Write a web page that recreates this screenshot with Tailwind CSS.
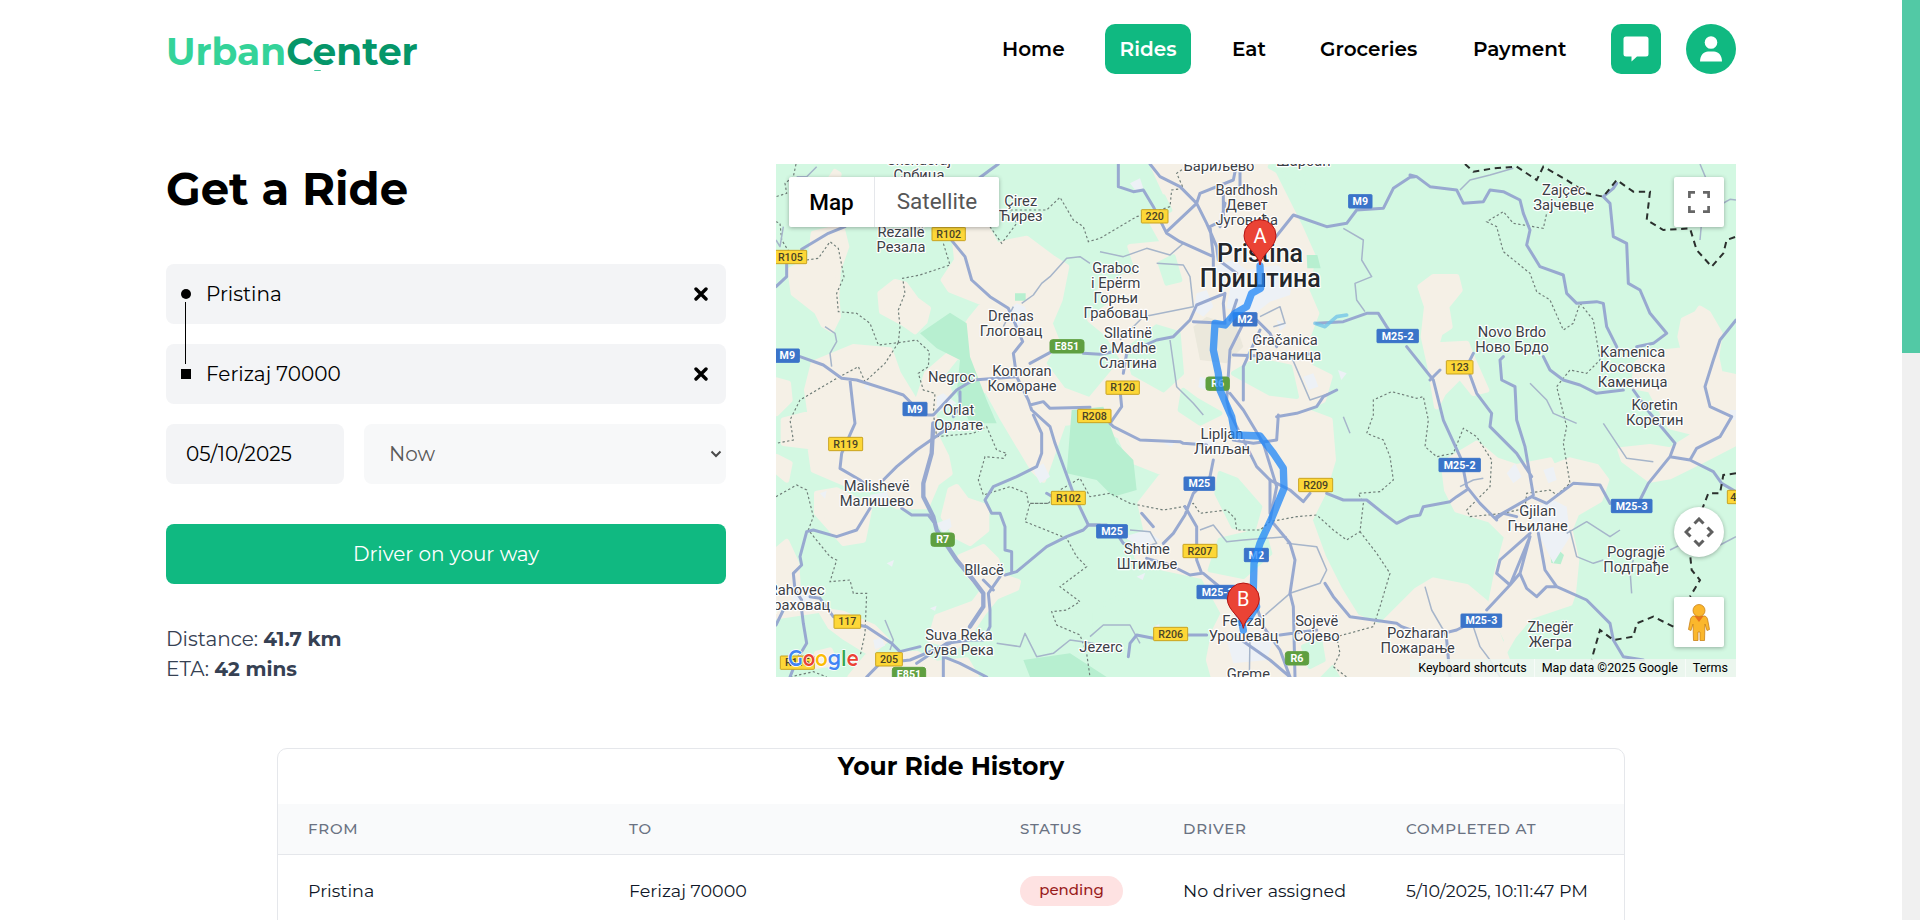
<!DOCTYPE html>
<html lang="en">
<head>
<meta charset="utf-8">
<title>UrbanCenter</title>
<script src="https://cdn.jsdelivr.net/npm/@tailwindcss/browser@4"></script>
</head>
<body class="bg-white text-black font-['Montserrat','Inter',sans-serif] w-[1920px] h-[920px] overflow-hidden flex">
<div class="w-[1902px] h-[920px] overflow-hidden">
  <header class="ml-[166px] w-[1570px] pt-6 flex items-center justify-between">
    <a class="relative pt-[3px] text-[37.5px] leading-[50px] h-[50px] font-bold whitespace-nowrap"><span class="text-[#34d399]">Urban</span><span class="text-[#059669]">Center</span><i class="absolute left-[148px] top-[46px] w-[7px] h-px rounded-t-full bg-[#10b981]/80"></i></a>
    <nav class="flex items-center text-[20px] font-semibold h-[50px]">
      <a class="w-[103px]">Home</a>
      <a class="w-[86px] h-[50px] rounded-[10px] bg-[#10b981] text-white flex items-center justify-center mr-[41px]">Rides</a>
      <a class="w-[88px]">Eat</a>
      <a class="w-[153px]">Groceries</a>
      <a class="w-[138px]">Payment</a>
      <button class="size-[50px] rounded-[10px] bg-[#10b981] flex items-center justify-center mr-[25px]">
        <svg width="26" height="26" viewBox="0 0 26 26" fill="#fff"><path d="M3 .5h20a2.500 2.500 0 0 1 2.500 2.500v15a2.500 2.500 0 0 1-2.500 2.500H14l-5.500 5v-5H3A2.500 2.500 0 0 1 .5 18V3A2.500 2.500 0 0 1 3 .5z"/></svg>
      </button>
      <button class="size-[50px] rounded-full bg-[#10b981] flex items-center justify-center">
        <svg width="24" height="26" viewBox="0 0 24 26" fill="#fff"><circle cx="12" cy="6.500" r="6.300"/><path d="M1 25.500c0-6.500 4-10 8-10h6c4 0 8 3.500 8 10z"/></svg>
      </button>
    </nav>
  </header>
  <main class="ml-[166px] w-[1570px] mt-[90px] flex gap-[50px] h-[513px]">
    <section class="w-[560px]">
      <h1 class="text-[45px] leading-[50px] font-bold whitespace-nowrap">Get a Ride</h1>
      <div class="relative mt-[50px] flex flex-col gap-5 text-[20px]">
        <div class="h-[60px] rounded-lg bg-gray-100 flex items-center px-[15px]">
          <i class="size-[10px] rounded-full bg-black mr-[15px]"></i><span>Pristina</span>
          <svg class="ml-auto mr-[3px]" width="14" height="14" viewBox="0 0 14 14" stroke="#000" stroke-width="3.400" stroke-linecap="round"><path d="M2 2l10 10M12 2L2 12"/></svg>
        </div>
        <div class="h-[60px] rounded-lg bg-gray-100 flex items-center px-[15px]">
          <i class="size-[10px] bg-black mr-[15px]"></i><span>Ferizaj 70000</span>
          <svg class="ml-auto mr-[3px]" width="14" height="14" viewBox="0 0 14 14" stroke="#000" stroke-width="3.400" stroke-linecap="round"><path d="M2 2l10 10M12 2L2 12"/></svg>
        </div>
        <i class="absolute left-[19px] top-[38px] w-px h-[62px] bg-black"></i>
        <div class="flex gap-5">
          <div class="w-[178px] h-[60px] rounded-lg bg-gray-100 flex items-center pl-5">05/10/2025</div>
          <div class="flex-1 h-[60px] rounded-lg bg-[#f7f8f9] flex items-center justify-between pl-[25px] pr-1 text-[#5a5a5a]"><span>Now</span>
            <svg width="12" height="8" viewBox="0 0 12 8" fill="none" stroke="#4a4a4a" stroke-width="2"><path d="M1.500 1.500L6 6l4.500-4.500"/></svg></div>
        </div>
      </div>
      <button class="mt-10 w-full h-[60px] rounded-lg bg-[#10b981] text-white text-[20px]">Driver on your way</button>
      <div class="mt-10 text-[20px] leading-[30px] text-gray-700 whitespace-nowrap">
        <p>Distance: <b>41.7 km</b></p>
        <p>ETA: <b>42 mins</b></p>
      </div>
    </section>
    <section class="relative w-[960px] h-[513px] overflow-hidden">
      <svg id="map" class="block" width="960" height="513" viewBox="18 12 2880 1539" font-family="Roboto, sans-serif">
        <rect x="0" y="0" width="2940" height="1600" fill="#d3f8e2"/>
        <g fill="#f5f0e6" stroke="#f5f0e6" stroke-width="16" stroke-linejoin="round">
          <path d="M195 35l12 8-4 20-30 5zM130 220L215 200L230 260L205 330L200 410L205 470L185 510L160 495L140 455L70 400L60 330L120 300zM330 400L375 365L405 372L440 420L475 445L465 485L435 515L400 490L335 455z"/>
          <path d="M550 200L650 200L680 255L720 245L770 235L850 295L890 320L870 420L840 490L860 540L820 610L880 690L960 720L1060 600L1010 520L960 480L1040 420L990 390L1060 350L1110 350L1080 260L1180 250L1130 160L1200 130L1150 20L1500 20L1540 100L1590 200L1630 290L1610 390L1640 460L1610 540L1620 620L1680 650L1660 720L1600 750L1680 780L1690 900L1660 1000L1620 1080L1660 1190L1710 1290L1760 1370L1830 1400L1940 1290L1990 1260L2090 1280L2150 1330L2190 1440L2230 1551L1900 1551L1720 1551L1690 1500L1640 1551L1330 1551L1310 1480L1320 1440L1360 1360L1300 1250L1160 1220L1100 1190L1130 1120L1110 1030L1180 940L1080 900L1050 830L960 780L880 790L820 960L790 930L700 780L650 690L600 700L610 600L560 590L520 640L540 700L490 745L500 830L530 890L540 940L500 970L470 1040L380 1040L340 960L270 990L130 930L120 860L40 850L40 780L120 760L110 690L130 610L250 560L360 570L385 640L440 730L470 640L540 580L560 540L600 480L640 430L540 390L520 360L560 300z"/>
          <path d="M20 660L55 670L60 720L20 760zM20 890L60 910L50 960L20 935zM140 1000L200 990L300 1040L280 1140L220 1150L140 1060zM540 990L560 980L590 1020L650 1040L650 1110L600 1150L560 1130L520 1070zM570 1190L640 1160L680 1200L700 1250L745 1265L740 1285L680 1310L640 1360L600 1420L560 1460L480 1440L500 1370L610 1330L640 1290L590 1240zM20 1170L50 1145L80 1210L85 1290L140 1310L150 1350L220 1360L310 1400L350 1440L300 1480L220 1430L180 1400L150 1350L20 1370zM140 1480L180 1470L200 1510L130 1520zM240 1551L290 1490L440 1480L500 1510L590 1500L620 1551z"/>
          <path d="M1950 380L1990 350L2060 350L2070 390L2030 440L2040 500L2010 520L2000 555L2090 550L2110 600L2150 690L2110 700L2070 650L2020 700L2000 740L1980 620L1960 530L1970 440zM2740 480L2780 460L2790 445L2815 460L2850 520L2840 590L2850 640L2898 650L2898 850L2800 900L2700 950L2640 960L2560 900L2550 870L2640 860L2700 870L2780 820L2700 800L2640 690L2590 680L2600 610L2640 580L2740 570L2730 530z"/>
          <path d="M2020 910L2120 850L2180 900L2240 920L2340 900L2350 920L2400 900L2480 920L2510 960L2490 1020L2420 1060L2400 1110L2420 1200L2410 1300L2400 1330L2280 1370L2230 1430L2190 1500L2210 1440L2160 1340L2180 1240L2210 1130L2160 1080L2060 1050L2030 990z"/>
          <path d="M1570 1180L1640 1220L1700 1300L1750 1370L1720 1410L1600 1400L1560 1280z"/>
        </g>
        <g fill="#d3f8e2" stroke="#d3f8e2" stroke-width="14" stroke-linejoin="round">
          <path d="M1160 500L1225 520L1235 640L1180 690L1090 640L1070 570zM1390 640L1460 600L1560 620L1580 710L1500 700zM1170 310L1210 290L1230 360L1190 370zM1350 940L1400 960L1470 1040L1450 1110L1390 1100L1340 1000zM1350 1140L1480 1110L1500 1180L1420 1250L1320 1230zM1120 120L1180 110L1200 150L1150 180zM1240 690L1280 720L1350 760L1290 790L1230 750zM1600 20L1500 20L1620 90zM1600 1460L1650 1440L1660 1500L1620 1520z"/>
          <path d="M1080 1300L1250 1290L1320 1400L1290 1551L960 1551L960 1350z"/>
        </g>
        <g fill="#b7efd0">
          <path d="M450 520L540 458L590 490L600 590L650 720L680 790L600 790L560 700L570 600L500 565zM905 750L1000 740L1040 850L1090 900L1100 990L1030 1010L980 960L890 940zM735 400h32v22h-32zM1610 285h32l10 40h-40zM760 1500L900 1480L1010 1551L780 1551zM2340 1175l20-10 22 20-10 28-28-4z"/>
          <path d="M1270 500L1310 470L1400 500L1420 560L1370 610L1290 600z" fill="#ebe8dc"/>
        </g>
        <g fill="#edf1f6">
          <path d="M690 470l50-40 25 10 10 40-30 20zM1330 320l60-20 40 30 90-15 50 30-10 60-60 20-50 40-80-20 10-60zM1080 70l30-15 10 30-20 10zM1280 400l30-10 20 50-30 30-30-20zM1290 650l30 10-10 30-25-8zM2270 1050l80-30 40 20 10 90-50 80-30-60zM300 1005l50-10 10 30-50 10zM500 1090l40-15 5 25-25 20zM60 1280l60 5 10 40-60 5zM1370 1440l90-30 50 30-20 60-100 10zM1060 1130l70-20 40 30-60 20zM790 930l30-20 20 40-30 20zM560 730l-60 30 0-50 20-10zM1270 845l60-10 20 40-60 10zM1600 650l30-10 15 40-30 10zM2210 940l25-30 20 40-25 20zM2320 930l30-10 10 40-25 10zM310 1440l25-8 10 25-30 10zM2880 750l18 0v30h-18z"/>
          <path d="M150 1000l20-8-5 24zM280 680l16-8 4 22zM350 1210l22-10-6 20zM480 1345l20-8-5 16zM1100 1250l26-12-8 22zM1150 1400l18-8 2 20zM1520 480l30 14-20 20zM1730 640l-26-10 10 30zM1180 850l36-10-10 20z"/>
        </g>
        <g fill="none" stroke="#6f7d78" stroke-width="3.500" stroke-dasharray="7 7">
          <path d="M78 12L70 50L45 70L50 100L18 110M18 185L30 190L35 240L60 280M110 300L145 295L180 245L205 265L222 350L200 400L205 455L260 460L300 490L325 555L385 548L390 500L385 450L405 400L398 355L450 345L480 335L540 315L520 250M385 548L345 610L285 665L265 620L200 655L90 720L60 780L70 840L18 850M385 548L440 540L478 575L475 620L445 640L460 690L495 700L490 760L500 830M660 200L695 250L740 190L720 150L830 150L870 112L910 180L940 200L955 245L990 235L1100 170L1155 155L1200 140L1205 90L1240 85L1220 40L1260 12"/>
          <path d="M500 830L610 820L650 800L680 870L710 880L700 895L645 890L625 960L640 1005L720 980L770 1000L775 1030L835 1030L780 1030L765 1085L890 1135L920 1190L950 1220L870 1280L930 1325L890 1350L845 1355L860 1395L930 1425L950 1480L960 1551M835 1030L870 990L930 955L960 1010L1020 1000L1080 1030L1180 1050L1240 1040L1270 1030L1290 1060L1370 1050L1395 1075L1400 1110L1470 1110L1500 1085L1580 1070L1640 1065L1690 1110L1730 1140L1770 1115L1780 1030L1765 1000L1830 995L1870 960L1860 890L1840 840L1790 820L1810 765L1810 720L1865 695L1940 715L1960 710L1975 780L1965 860L2000 890L2050 880L2080 805L2120 830L2165 900L2160 980L2090 1050L2100 1070L2200 1060L2265 1045L2270 1000L2340 990L2360 1005L2400 970L2380 850L2390 800L2370 720L2360 680L2400 630L2450 640L2490 600L2470 480L2430 430L2410 490L2380 510L2340 420L2300 395L2280 340L2200 275L2180 200L2150 185L2200 155L2230 190L2320 205L2330 160"/>
          <path d="M18 1010L80 975L110 990L130 1070L115 1110L180 1190L200 1200L180 1265L240 1260L250 1300L290 1300L285 1420L270 1490M1770 1115L1820 1180L1860 1240L1830 1340L1810 1400L1700 1430L1710 1480L1690 1520L1730 1551M60 1551L130 1535L170 1551"/>
        </g>
        <g fill="none" stroke="#a6b5ca" stroke-width="4.500" stroke-linejoin="round">
          <path d="M165 500L195 520L200 545L180 580L185 620M755 430L790 405L815 370L840 350L890 295L930 290L960 310M990 275L1060 290L1130 265L1200 285L1240 250M700 500L730 440M1720 205L1780 240L1775 300L1805 350L1755 370L1760 420L1785 455M1160 310L1240 315L1260 350L1270 440L1120 470L1050 540M1200 540L1220 680L1270 730L1300 765M1470 470L1530 440L1545 490L1510 500M1560 580L1590 650L1620 720L1680 700M1080 1110L1140 1115L1160 1150L1090 1170M1290 1110L1330 1095L1370 1145L1420 1140L1550 1130M1550 1150L1640 1160L1670 1230L1650 1270L1560 1300L1480 1370M960 1430L1000 1395L1080 1395L1110 1450M2070 90L2100 60L2160 45L2230 25M2790 12L2810 60L2800 130L2790 240M2850 135L2880 118L2898 120M2400 1110L2420 1190L2470 1210L2500 1200M2390 1120L2450 1085L2520 1130L2550 1110M2500 790L2540 850L2570 895L2650 905M2590 1200L2580 1230L2585 1300M2740 1150L2700 1170M2850 1155L2898 1130M1965 1280L1985 1350L2020 1410L2030 1440M2110 1400L2130 1460L2160 1500L2190 1551M345 1380L370 1440L360 1470M680 1450L750 1460L765 1420L800 1490L850 1480L900 1440L970 1450M2280 670L2330 720L2350 760L2420 790M1440 1430L1438 1551M1720 770L1740 820"/>
          <path d="M18 240L30 260L40 200M140 20L110 50L80 50M2070 980L2110 960L2140 955"/>
        </g>
        <g fill="none" stroke="#98a9d0" stroke-width="9" stroke-linejoin="round" stroke-linecap="round">
          <path d="M95 268L150 235L175 220L225 200M620 60L660 30L685 12M18 380L50 350L50 310M540 235L585 290L605 360L660 410L715 445L735 490L758 545L730 580L740 650L775 720L785 750L840 800L855 850L910 1000L955 1095M90 590L160 615L215 655L260 660L370 695L400 705L430 735M240 660L250 750L255 790L215 880L210 925L270 960L300 985M780 610L845 575M940 580L990 583L1060 570M430 765L490 765L560 690L610 660L680 655L740 650M570 695L570 740L550 770M340 960L380 920L440 870L540 800M395 1045L425 1065L475 1065L490 1085M780 735L820 725L840 745L960 742M300 1045L260 1110L200 1130L130 1110L110 1115L90 1190L95 1215L70 1240L75 1290L95 1320M95 1350L100 1390L110 1450L80 1500L60 1551M18 1395L40 1350M120 1310L150 1315L190 1370L240 1390L290 1400L365 1450L390 1475L450 1460M440 1510L530 1450L600 1440L640 1440L660 1400L660 1350L655 1300L690 1250"/>
          <path d="M790 765L815 820L815 880L800 920L740 950L670 980L645 1020L665 1060L690 1060L705 1100L705 1170L725 1175L725 1235M705 1245L740 1235L830 1160L890 1130L940 1110L955 1095L1010 1095M1115 1060L1150 1100M830 1000L880 1030M290 1551L330 1510L420 1500L540 1450M520 1551L520 1490L570 1510L650 1551M640 1260L670 1290"/>
          <path d="M1045 12L1045 80L1090 95L1120 90L1150 140L1190 220L1230 245L1330 290M1140 12L1170 50L1230 80L1280 130L1310 190L1340 260L1345 300L1400 340M1400 12L1390 60L1290 100L1280 130L1190 215M1410 12L1410 80M1360 100L1360 180L1320 200L1330 290L1330 320M1365 130L1350 200M1510 240L1570 165L1670 200L1730 190L1760 150L1840 145L1870 85L1920 52L1935 50M1270 485L1365 490M1365 490L1360 430L1365 400L1280 435L1260 480L1210 530L1160 540L1070 580L1060 640M1400 420L1380 480M1415 500L1380 570L1370 720L1380 760L1460 920L1500 960L1500 1060M1050 690L1055 740L1020 790L1030 800L1110 840L1230 845L1240 850L1310 855M1330 900L1320 950L1270 1000L1245 1065L1210 1120L1180 1150M1245 1040L1280 1100L1280 1200L1295 1240L1260 1245L1200 1215L1130 1195M1300 1240L1360 1290L1385 1340L1410 1380M960 1095L990 1095M1040 1120L1060 1150L1110 1170M1380 700L1420 750L1480 850L1520 980L1500 1080M1390 585L1540 590L1640 580M1460 480L1500 520L1520 560M1640 490L1720 485L1790 460L1825 460L1850 500L1870 530M1910 560L1990 660L2020 780L2075 900L2090 980L2130 1030L2180 1080"/>
          <path d="M1390 840L1450 850L1520 840L1525 765M1520 770L1580 760L1640 740L1660 710L1700 690M1470 510L1420 620L1420 720M1500 960L1540 980L1560 990L1600 1025L1620 1000M1670 1000L1720 1020L1790 1020L1840 1060L1880 1090L1920 1070L1950 1065L1960 1040L2040 1025L2060 1010L2090 990M1510 1090L1560 1150L1575 1200L1560 1300L1570 1340L1575 1551M1665 1270L1690 1310L1740 1370L1880 1390L1895 1400L1980 1430L2060 1410L2090 1395M1075 1490L1080 1450L1100 1425L1150 1435M1250 1425L1310 1425M1400 1430L1500 1500L1560 1551M1460 1340L1480 1400L1530 1470L1560 1551M1530 1425L1640 1410M2030 1440L2040 1551"/>
          <path d="M1920 45L1940 50L1980 80L2060 90L2080 130L2140 125L2160 90L2200 95L2250 120L2260 160L2280 210L2270 255L2310 320L2380 345L2390 400L2420 430L2480 425L2500 430L2510 500L2540 560L2545 580M2500 110L2530 85L2540 70M2500 110L2520 130L2530 230L2570 250L2575 370L2610 390L2640 460L2690 520L2650 550L2600 560M2590 690L2640 760L2715 850L2700 890L2635 970L2610 1020M2700 890L2760 900L2780 865L2850 830L2885 770L2820 740L2805 680L2830 600L2850 540L2898 480M2760 900L2830 935L2855 970L2898 995M2320 590L2340 630L2380 660L2430 675L2480 700L2560 690M2200 590L2190 600L2195 660L2235 680L2240 780L2265 860L2290 1005M2110 580L2090 620M1980 660L2010 630M2100 645L2120 700L2165 760L2160 800L2240 880L2285 950M2285 1010L2330 1030L2410 970L2490 975L2520 1030M2285 1010L2250 1030L2180 1070M2180 1075L2200 1060L2240 1070"/>
          <path d="M2280 1120L2190 1200L2180 1240L2220 1275L2280 1130L2250 1240L2220 1275L2150 1350M2305 1120L2325 1230L2360 1280L2450 1320L2480 1350L2520 1390L2530 1440L2560 1490L2620 1500M2250 1240L2270 1285L2300 1310L2330 1280L2360 1280"/>
        </g>
        <g fill="none" stroke="#98a9d0" stroke-width="13" stroke-linecap="round" stroke-linejoin="round"><path d="M490 790L485 880L460 970L460 1010L490 1070L500 1110L560 1200L610 1260L640 1300L640 1340L600 1400"/></g>
        <g fill="none" stroke="#2b2f2d" stroke-width="6" stroke-dasharray="19 14">
          <path d="M2085 12L2110 35L2170 25L2240 20L2300 60L2320 20L2390 60L2450 100L2500 110L2540 60L2590 95L2640 95L2630 180L2680 210L2760 205L2780 270L2825 320L2860 280L2870 240L2898 230M2898 940L2860 945L2850 1000L2815 1000L2780 1090L2760 1180L2765 1230L2790 1260L2760 1310M2710 1400L2650 1370L2600 1390L2590 1430L2530 1440L2490 1410L2470 1480L2465 1500"/>
        </g>
        <g fill="none" stroke-linecap="round" stroke-linejoin="round">
          <path d="M1635 490L1665 500L1700 470L1730 465" stroke="#6fc3e8" stroke-width="11" opacity=".75"/>
        </g>
        <g id="shields" font-size="32" text-anchor="middle"></g>
        <g id="places" font-size="44" text-anchor="middle" fill="#3c4046" stroke="#fff" stroke-width="7" stroke-linejoin="round" paint-order="stroke"></g>
        <path d="M1470 318L1472 385L1445 400L1430 440L1395 460L1365 495L1335 490L1330 570L1345 640L1350 690L1385 770L1395 825L1470 828L1510 880L1540 925L1542 985L1505 1075L1470 1150L1452 1210L1450 1290L1460 1340L1440 1370L1415 1385L1420 1410" fill="none" stroke="#1f86f7" stroke-width="22" stroke-linecap="round" stroke-linejoin="round" opacity=".76"/>
        <g stroke="#b31412" stroke-width="3" fill="#ea4335">
          <path d="M1470 315C1466 282 1422 262 1422 227a48 48 0 0 1 96 0C1518 262 1474 282 1470 315z"/>
          <path d="M1420 1405C1416 1372 1372 1352 1372 1317a48 48 0 0 1 96 0C1468 1352 1424 1372 1420 1405z"/>
        </g>
        <g fill="#fff" font-size="60" text-anchor="middle"><text x="1470" y="248">A</text><text x="1420" y="1338">B</text></g>
        <g font-family="Montserrat, Lato, sans-serif" font-size="68" font-weight="600" stroke="#fff" stroke-width="5" paint-order="stroke" stroke-linejoin="round"><text x="54" y="1518" textLength="212" lengthAdjust="spacingAndGlyphs"><tspan fill="#4285f4">G</tspan><tspan fill="#ea4335">o</tspan><tspan fill="#fbbc04">o</tspan><tspan fill="#4285f4">g</tspan><tspan fill="#34a853">l</tspan><tspan fill="#ea4335">e</tspan></text></g>
      </svg>
      <div class="absolute left-[13px] top-[13px] h-[50px] bg-white rounded-[2px] shadow-[0_1px_4px_rgba(0,0,0,0.3)] flex items-center font-['Roboto',sans-serif] text-[22.500px]">
        <span class="w-[86px] text-center font-medium border-r border-gray-200 leading-[50px]">Map</span><span class="w-[124px] text-center text-[#565656]">Satellite</span>
      </div>
      <div class="absolute right-3 top-[13px] size-[50px] bg-white rounded-[2px] shadow-[0_1px_4px_rgba(0,0,0,0.3)] flex items-center justify-center">
        <svg width="22" height="22" viewBox="0 0 22 22" fill="none" stroke="#666" stroke-width="2.700"><path d="M1.400 7V1.400H7M15 1.400h5.600V7M20.600 15v5.600H15M7 20.600H1.400V15"/></svg>
      </div>
      <div class="absolute right-3 top-[343px] size-[50px] bg-white rounded-full shadow-[0_1px_4px_rgba(0,0,0,0.3)] flex items-center justify-center">
        <svg width="30" height="30" viewBox="0 0 30 30" fill="none" stroke="#5f5f5f" stroke-width="3"><path d="M10.500 6.500L15 2l4.500 4.500M10.500 23.500L15 28l4.500-4.500M6.500 10.500L2 15l4.500 4.500M23.500 10.500L28 15l-4.500 4.500"/></svg>
      </div>
      <div class="absolute right-3 top-[433px] size-[50px] bg-white rounded-[2px] shadow-[0_1px_4px_rgba(0,0,0,0.3)] flex items-center justify-center">
        <svg width="22" height="37" viewBox="0 0 22 37" fill="#fbb72c" stroke="#c8821a" stroke-width=".8"><path d="M5 12h12q2 1 2.500 3l2 10.500-2.500 1-2-6.500-.5 16.500h-4.500V28h-2v8.500H5.500L5 20l-2 6.500-2.500-1L2.500 15Q3 13 5 12z"/><path d="M6.500 12L11 18l4.500-6z" fill="#e8711c" stroke="none"/><circle cx="11" cy="6.500" r="6"/></svg>
      </div>
      <div class="absolute right-0 bottom-0 h-[18px] bg-[#eff6f0]/85 flex items-center font-['Roboto',sans-serif] text-[12.500px] text-black whitespace-nowrap">
        <span class="pl-2 pr-[7px]">Keyboard shortcuts</span><span class="px-[7px] border-l border-white/60">Map data ©2025 Google</span><span class="pl-[7px] pr-2 border-l border-white/60">Terms</span>
      </div>
    </section>
  </main>
  <section class="ml-[277px] mt-[71px] w-[1348px] h-[200px] border border-gray-200 rounded-t-[10px] overflow-hidden">
    <h2 class="text-center text-[25px] leading-[35px] font-bold pb-5">Your Ride History</h2>
    <div class="h-[51px] bg-gray-50 border-b border-gray-200 grid grid-cols-[321px_391px_163px_223px_1fr] pl-[30px] items-center text-[15px] font-medium tracking-wider text-gray-500">
      <div>FROM</div><div>TO</div><div>STATUS</div><div>DRIVER</div><div>COMPLETED AT</div>
    </div>
    <div class="h-[72px] grid grid-cols-[321px_391px_163px_223px_1fr] pl-[30px] items-center text-[17.500px] text-gray-900">
      <div>Pristina</div><div>Ferizaj 70000</div><div class="w-[103px] h-[30px] -mt-px rounded-full bg-[#fee2e2] text-[#991b1b] text-[15px] font-medium flex items-center justify-center">pending</div><div>No driver assigned</div><div>5/10/2025, 10:11:47 PM</div>
    </div>
  </section>
</div>
<aside class="w-[18px] h-[920px] bg-[#f0f0f0]"><div class="h-[353px] bg-[#52c9a5]"></div></aside>
<script>
const NS = 'http://www.w3.org/2000/svg';
function add(parent, tag, attrs, text) {
  const el = document.createElementNS(NS, tag);
  for (const k in attrs) el.setAttribute(k, attrs[k]);
  if (text) el.textContent = text;
  parent.appendChild(el);
}
const palette = { y: ['#fdd737', '#c9a321', '#4a4326'], b: ['#3b74c9', '#3b74c9', '#fff'], g: ['#5f9f40', '#5f9f40', '#fff'] };
// [colour, centre x, centre y, width, road number]
const shields = [
  ['y', 536, 222, 100, 'R102'], ['y', 61, 291, 98, 'R105'], ['b', 52, 587, 72, 'M9'], ['b', 435, 747, 72, 'M9'], ['g', 891, 559, 102, 'E851'],
  ['y', 1154, 169, 80, '220'], ['b', 1771, 124, 70, 'M9'], ['b', 1425, 478, 72, 'M2'], ['b', 1883, 528, 124, 'M25-2'], ['g', 1343, 671, 70, 'R6'],
  ['y', 1058, 683, 100, 'R120'], ['y', 973, 768, 100, 'R208'], ['y', 2069, 622, 80, '123'], ['y', 227, 852, 102, 'R119'], ['y', 895, 1014, 102, 'R102'],
  ['g', 518, 1139, 70, 'R7'], ['y', 232, 1385, 80, '117'], ['y', 82, 1508, 102, 'R115'], ['y', 357, 1498, 80, '205'], ['g', 417, 1542, 100, 'E851'],
  ['b', 1288, 971, 92, 'M25'], ['b', 1026, 1114, 92, 'M25'], ['y', 1290, 1173, 102, 'R207'], ['y', 1637, 975, 102, 'R209'], ['b', 1459, 1185, 72, 'M2'],
  ['b', 1343, 1296, 124, 'M25-3'], ['y', 1202, 1422, 102, 'R206'], ['g', 1581, 1495, 70, 'R6'], ['b', 2069, 915, 124, 'M25-2'], ['b', 2585, 1038, 122, 'M25-3'],
  ['b', 2134, 1382, 122, 'M25-3'], ['y', 2890, 1011, 36, '4']
];
const sg = document.getElementById('shields');
for (const [c, x, y, w, t] of shields) {
  const [bg, line, fg] = palette[c];
  add(sg, 'rect', { x: x - w / 2, y: y - 20, width: w, height: 40, rx: c === 'g' ? 8 : 2, fill: bg, stroke: line, 'stroke-width': 3 });
  add(sg, 'text', { x, y: y + 11, fill: fg, 'font-weight': c === 'y' ? 500 : 700 }, t);
}
// [centre x, first baseline, ...lines]
const places = [
  [447, 14, 'Skenderaj', 'Србица'], [752, 137, 'Çirez', 'Ћирез'], [393, 231, 'Rezallë', 'Резала'], [723, 484, 'Drenas', 'Глоговац'],
  [545, 665, 'Negroc'], [756, 649, 'Komoran', 'Коморане'], [566, 765, 'Orlat', 'Орлате'], [1037, 339, 'Graboc', 'i Epërm', 'Горњи', 'Грабовац'],
  [1074, 534, 'Sllatinë', 'e Madhe', 'Слатина'], [1347, 33, 'Бариљево'], [1600, 17, 'Шарбан'], [1430, 106, 'Bardhosh', 'Девет', 'Југовића'],
  [1545, 556, 'Gračanica', 'Грачаница'], [2381, 106, 'Zajçec', 'Зајчевце'], [2226, 530, 'Novo Brdo', 'Ново Брдо'], [2588, 590, 'Kamenica', 'Косовска', 'Каменица'],
  [2654, 749, 'Koretin', 'Коретин'], [320, 992, 'Malishevë', 'Малишево'], [642, 1245, 'Bllacë'], [80, 1304, 'Rahovec', 'Ораховац'],
  [567, 1439, 'Suva Reka', 'Сува Река'], [993, 1475, 'Jezerc'], [1356, 837, 'Lipljan', 'Липљан'], [1131, 1182, 'Shtime', 'Штимље'],
  [1421, 1398, 'Ferizaj', 'Урошевац'], [1640, 1398, 'Sojevë', 'Сојево'], [1435, 1557, 'Greme'], [1943, 1433, 'Pozharan', 'Пожарање'],
  [2303, 1068, 'Gjilan', 'Гњилане'], [2598, 1191, 'Pogragjë', 'Подграђе'], [2341, 1415, 'Zhegër', 'Жегра']
];
const pg = document.getElementById('places');
for (const [x, y, ...lines] of places) lines.forEach((t, i) => add(pg, 'text', { x, y: y + i * 45 }, t));
add(pg, 'text', { x: 1470, y: 305, 'font-size': 75, 'font-weight': 500, fill: '#24272b' }, 'Pristina');
add(pg, 'text', { x: 1471, y: 381, 'font-size': 75, 'font-weight': 500, fill: '#24272b' }, 'Приштина');
</script>
</body>
</html>
